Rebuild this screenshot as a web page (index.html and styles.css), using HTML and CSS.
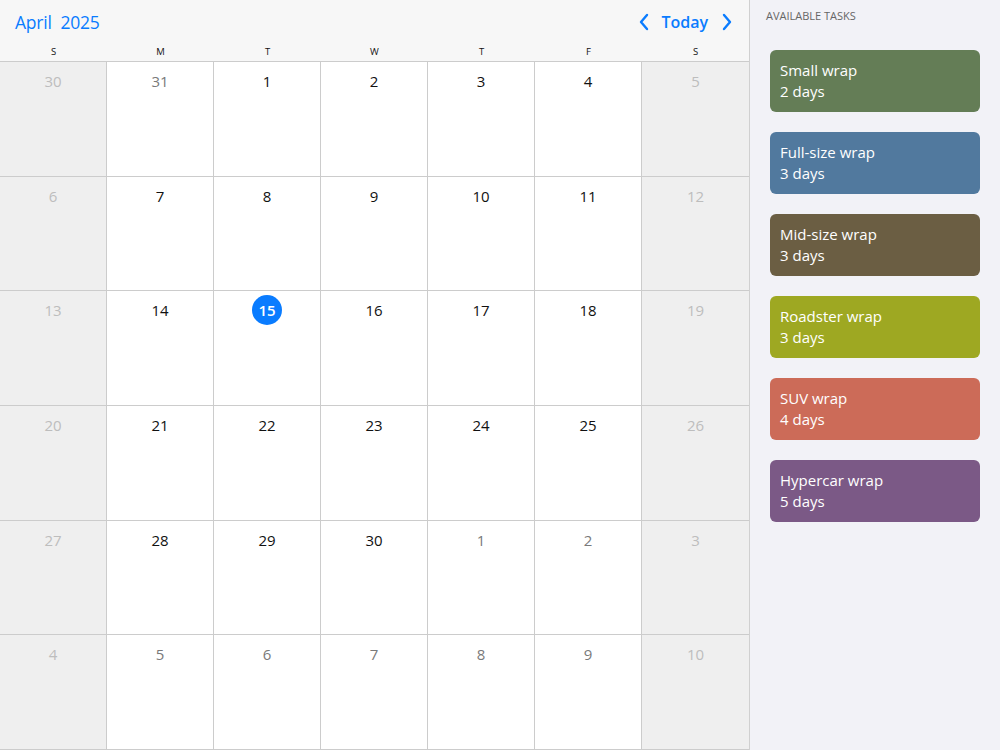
FILE: index.html
```html
<!DOCTYPE html>
<html>
<head>
<meta charset="utf-8">
<link rel="stylesheet" href="styles.css">
</head>
<body>
<div class="app">
  <div class="calendar">
    <div class="cal-head">
      <div class="title">April&nbsp; 2025</div>
      <div class="nav">
        <svg class="chev" width="12" height="18" viewBox="0 0 12 18"><path d="M9 2 L3 9 L9 16" fill="none" stroke="#0a7cff" stroke-width="2.4" stroke-linecap="round" stroke-linejoin="round"/></svg>
        <span class="today">Today</span>
        <svg class="chev" width="12" height="18" viewBox="0 0 12 18"><path d="M3 2 L9 9 L3 16" fill="none" stroke="#0a7cff" stroke-width="2.4" stroke-linecap="round" stroke-linejoin="round"/></svg>
      </div>
    </div>
    <div class="dows">
      <div>S</div><div>M</div><div>T</div><div>W</div><div>T</div><div>F</div><div>S</div>
    </div>
    <div class="grid">
      <div class="cell we"><span class="n">30</span></div>
      <div class="cell out"><span class="n">31</span></div>
      <div class="cell"><span class="n">1</span></div>
      <div class="cell"><span class="n">2</span></div>
      <div class="cell"><span class="n">3</span></div>
      <div class="cell"><span class="n">4</span></div>
      <div class="cell we"><span class="n">5</span></div>

      <div class="cell we"><span class="n">6</span></div>
      <div class="cell"><span class="n">7</span></div>
      <div class="cell"><span class="n">8</span></div>
      <div class="cell"><span class="n">9</span></div>
      <div class="cell"><span class="n">10</span></div>
      <div class="cell"><span class="n">11</span></div>
      <div class="cell we"><span class="n">12</span></div>

      <div class="cell we"><span class="n">13</span></div>
      <div class="cell"><span class="n">14</span></div>
      <div class="cell"><span class="n now">15</span></div>
      <div class="cell"><span class="n">16</span></div>
      <div class="cell"><span class="n">17</span></div>
      <div class="cell"><span class="n">18</span></div>
      <div class="cell we"><span class="n">19</span></div>

      <div class="cell we"><span class="n">20</span></div>
      <div class="cell"><span class="n">21</span></div>
      <div class="cell"><span class="n">22</span></div>
      <div class="cell"><span class="n">23</span></div>
      <div class="cell"><span class="n">24</span></div>
      <div class="cell"><span class="n">25</span></div>
      <div class="cell we"><span class="n">26</span></div>

      <div class="cell we"><span class="n">27</span></div>
      <div class="cell"><span class="n">28</span></div>
      <div class="cell"><span class="n">29</span></div>
      <div class="cell"><span class="n">30</span></div>
      <div class="cell out"><span class="n">1</span></div>
      <div class="cell out"><span class="n">2</span></div>
      <div class="cell we"><span class="n">3</span></div>

      <div class="cell we"><span class="n">4</span></div>
      <div class="cell out"><span class="n">5</span></div>
      <div class="cell out"><span class="n">6</span></div>
      <div class="cell out"><span class="n">7</span></div>
      <div class="cell out"><span class="n">8</span></div>
      <div class="cell out"><span class="n">9</span></div>
      <div class="cell we"><span class="n">10</span></div>
    </div>
  </div>
  <div class="side">
    <div class="side-title">AVAILABLE TASKS</div>
    <div class="tasks">
      <div class="task t1"><div>Small wrap</div><div>2 days</div></div>
      <div class="task t2"><div>Full-size wrap</div><div>3 days</div></div>
      <div class="task t3"><div>Mid-size wrap</div><div>3 days</div></div>
      <div class="task t4"><div>Roadster wrap</div><div>3 days</div></div>
      <div class="task t5"><div>SUV wrap</div><div>4 days</div></div>
      <div class="task t6"><div>Hypercar wrap</div><div>5 days</div></div>
    </div>
  </div>
</div>
</body>
</html>
```

FILE: styles.css
```css
* { box-sizing: border-box; }
html, body { margin: 0; padding: 0; }
body {
  font-family: "Open Sans", "Noto Sans", "Liberation Sans", sans-serif;
  width: 1000px;
  height: 750px;
  overflow: hidden;
  background: #f2f2f7;
}
.app {
  display: flex;
  height: 750px;
}
.calendar {
  width: 750px;
  height: 750px;
  display: flex;
  flex-direction: column;
  background: #f7f7f7;
  border-right: 1px solid #d0d0d0;
}
.cal-head {
  height: 45px;
  display: flex;
  align-items: center;
  justify-content: space-between;
  padding: 0 16px 0 15px;
}
.title {
  color: #0a7cff;
  font-size: 17.5px;
  letter-spacing: -0.2px;
  margin-top: -2px;
}
.nav {
  display: flex;
  align-items: center;
  margin-top: -2px;
}
.chev { display: block; }
.today {
  color: #0a7cff;
  font-weight: 600;
  font-size: 16px;
  margin: 0 13px 0 11px;
}
.dows {
  height: 17px;
  display: grid;
  grid-template-columns: repeat(7, 1fr);
  font-size: 9.5px;
  color: #111;
  text-align: center;
  line-height: 14px;
  border-bottom: 1px solid #cccccc;
}
.grid {
  flex: 1;
  display: grid;
  grid-template-columns: repeat(7, 1fr);
  grid-template-rows: repeat(6, 1fr);
  background: #ffffff;
}
.cell {
  border-right: 1px solid #cccccc;
  border-bottom: 1px solid #cccccc;
  display: flex;
  justify-content: center;
  align-items: flex-start;
  padding-top: 7px;
  font-size: 15px;
  color: #111;
}
.cell:nth-child(7n) { border-right: none; }
.cell.we { background: #efefef; color: #bdbdbd; }
.cell.out { color: #7a7a7a; }
.n {
  height: 30px;
  min-width: 30px;
  display: flex;
  align-items: center;
  justify-content: center;
  margin-top: -3px;
}
.n.now {
  background: #0a7cff;
  color: #fff;
  border-radius: 50%;
  font-weight: 600;
}
.side {
  flex: 1;
  padding: 8px 20px 0 16px;
}
.side-title {
  font-size: 11px;
  color: #666;
  line-height: 16px;
}
.tasks {
  display: flex;
  flex-direction: column;
  gap: 20px;
  margin-top: 26px;
  padding-left: 4px;
}
.task {
  height: 62px;
  border-radius: 6px;
  color: #fff;
  font-size: 15px;
  line-height: 21px;
  padding: 10px 10px;
}
.t1 { background: #647d56; }
.t2 { background: #51799e; }
.t3 { background: #6b5e43; }
.t4 { background: #9ea822; }
.t5 { background: #cc6b58; }
.t6 { background: #7b5986; }
```
